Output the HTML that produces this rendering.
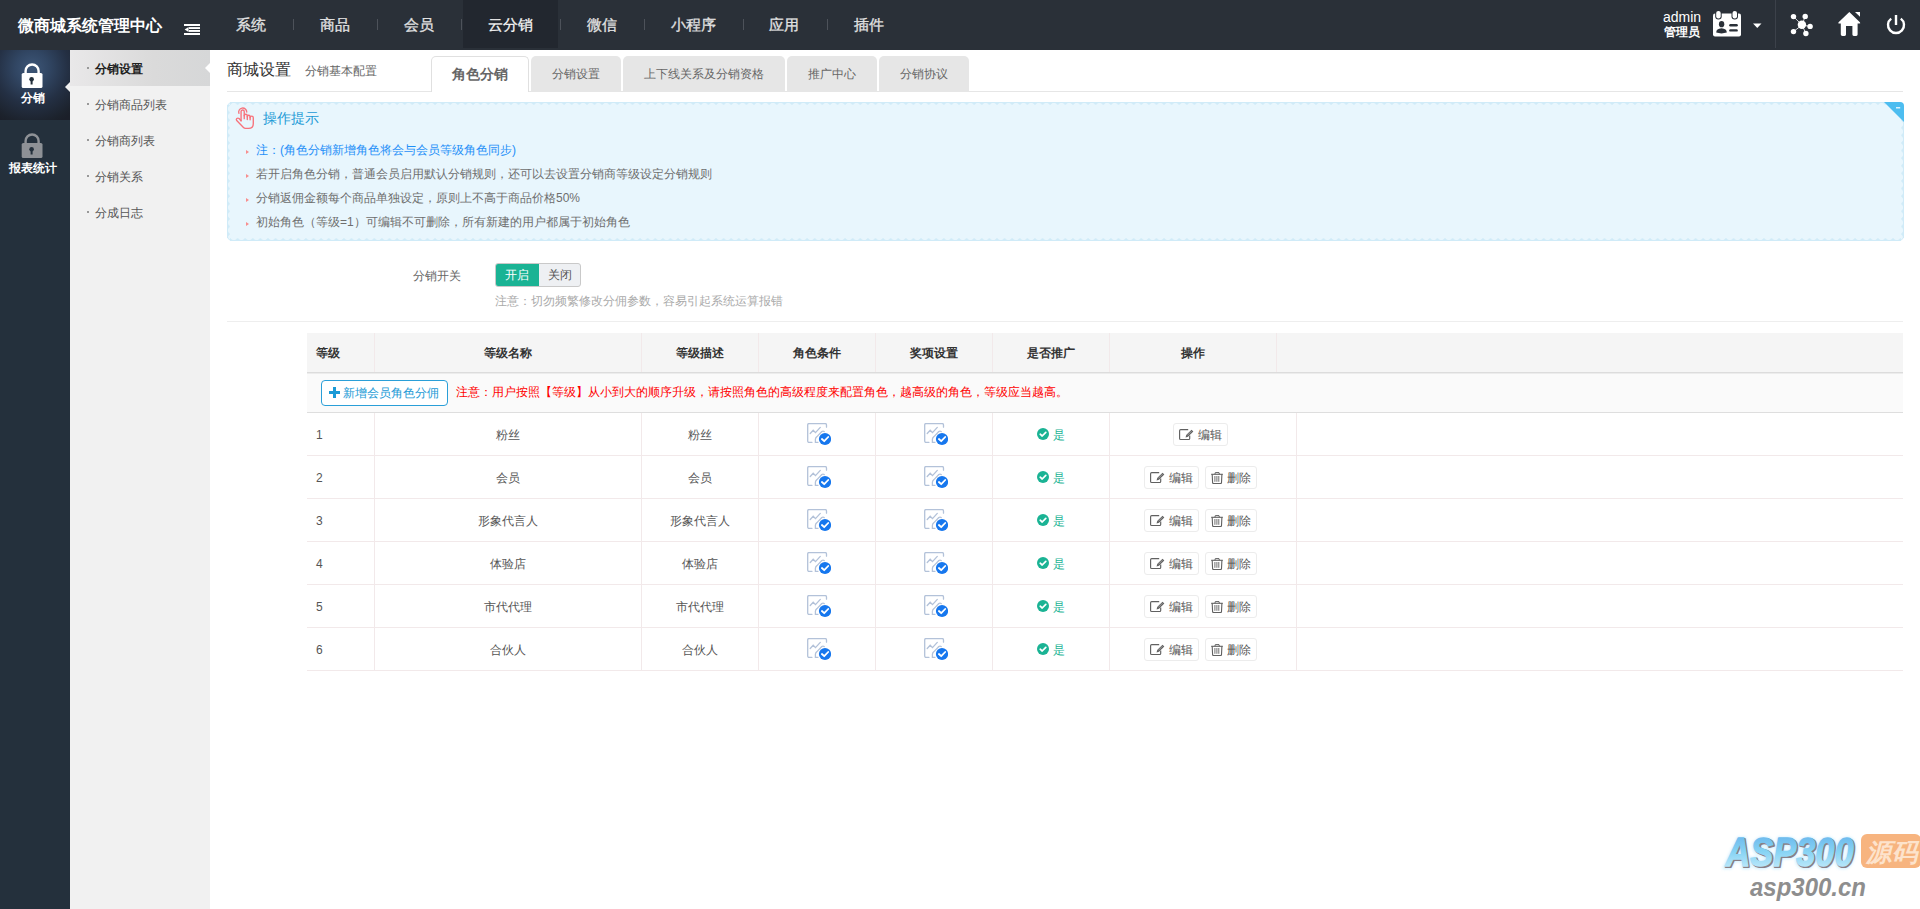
<!DOCTYPE html>
<html><head><meta charset="utf-8">
<style>
*{box-sizing:border-box}
html,body{margin:0;padding:0}
body{width:1920px;height:909px;overflow:hidden;position:relative;background:#fff;font-family:"Liberation Sans",sans-serif;font-size:12px;color:#333}
.a{position:absolute;white-space:nowrap}
#top{position:absolute;left:0;top:0;width:1920px;height:50px;background:#2a3038}
.nav{position:absolute;top:15px;font-size:15px;line-height:20px;color:#e2e2e2;-webkit-text-stroke:0.3px #e2e2e2}
.sep{position:absolute;top:19px;width:1px;height:11px;background:#4d525a}
#side1{position:absolute;left:0;top:50px;width:70px;height:859px;background:#24303c}
#side2{position:absolute;left:70px;top:50px;width:140px;height:859px;background:#f1f1f1}
.s2{position:absolute;left:25px;font-size:12px;line-height:16px;color:#555}
.s2 i{position:absolute;left:-8px;top:6px;width:2px;height:2px;background:#999}

.tab{position:absolute;top:56px;height:35px;background:#e6e6e6;border-radius:5px 5px 0 0;text-align:center;font-size:12px;line-height:36px;color:#666}
.tab.act{background:#fff;border:1px solid #e0e0e0;border-bottom:none;height:36px;font-size:14px;font-weight:bold;line-height:34px;color:#666}
#tips{position:absolute;left:227px;top:102px;width:1677px;height:139px;background:#e8f6fd;border:0;border-radius:5px}
#tips .bt{position:absolute;left:3px;right:3px;top:0;height:4px;background:radial-gradient(circle at 50% 5px,transparent 3.7px,#d0ebf8 4.4px) repeat-x;background-size:7.6px 4px}
#tips .bb{position:absolute;left:3px;right:3px;bottom:0;height:4px;background:radial-gradient(circle at 50% -1px,transparent 3.7px,#d0ebf8 4.4px) repeat-x;background-size:7.6px 4px}
#tips .bl{position:absolute;top:3px;bottom:3px;left:0;width:4px;background:radial-gradient(circle at 5px 50%,transparent 3.7px,#d0ebf8 4.4px) repeat-y;background-size:4px 7.6px}
#tips .br{position:absolute;top:3px;bottom:3px;right:0;width:4px;background:radial-gradient(circle at -1px 50%,transparent 3.7px,#d0ebf8 4.4px) repeat-y;background-size:4px 7.6px}
#tips .bc{position:absolute;inset:0;border:1.5px solid #d6eefa;border-radius:5px}
.li{position:absolute;left:29px;font-size:12px;line-height:16px;color:#6e6e6e;white-space:nowrap}
.li b{position:absolute;left:-10px;top:7.5px;width:0;height:0;border-left:3px solid #f88e8e;border-top:2.5px solid transparent;border-bottom:2.5px solid transparent}

#tbl{position:absolute;left:307px;top:0;width:1596px;height:0}
#tbl .vl{width:1px;background:#f2e9ea}
.th{font-size:12px;line-height:16px;font-weight:bold;color:#333}
.td{font-size:12px;line-height:16px;color:#555}
.addbtn{width:127px;height:26px;border:1px solid #2a9fd8;border-radius:4px;background:#fff;font-size:12px;line-height:16px;color:#1b9ad6}
.opbtn{height:23px;border:1px solid #ececec;border-radius:3px;background:#fff;font-size:12px;line-height:16px;color:#555}
</style></head><body>
<div id="top">
  <div class="a" style="left:18px;top:15px;font-size:16px;line-height:22px;font-weight:bold;color:#fff">微商城系统管理中心</div>
  <svg class="a" style="left:184px;top:24px" width="16" height="11" viewBox="0 0 16 11"><rect x="0" y="0" width="16" height="2" fill="#fff"/><rect x="5" y="3.1" width="11" height="1.9" fill="#fff"/><rect x="5" y="6" width="11" height="1.9" fill="#fff"/><polygon points="0.6,5.5 4.6,2.9 4.6,8.1" fill="#fff"/><rect x="0" y="9" width="16" height="2" fill="#fff"/></svg>
  <div class="a" style="left:463px;top:0;width:95px;height:48px;background:#22272f"></div>
  <div class="nav a" style="left:236px">系统</div>
  <div class="sep" style="left:293px"></div>
  <div class="nav a" style="left:320px">商品</div>
  <div class="sep" style="left:377px"></div>
  <div class="nav a" style="left:404px">会员</div>
  <div class="sep" style="left:461px"></div>
  <div class="nav a" style="left:488px;color:#fff">云分销</div>
  <div class="sep" style="left:560px"></div>
  <div class="nav a" style="left:587px">微信</div>
  <div class="sep" style="left:644px"></div>
  <div class="nav a" style="left:671px">小程序</div>
  <div class="sep" style="left:743px"></div>
  <div class="nav a" style="left:769px">应用</div>
  <div class="sep" style="left:827px"></div>
  <div class="nav a" style="left:854px">插件</div>

  <div class="a" style="left:1663px;top:9px;font-size:14px;line-height:17px;color:#fff">admin</div>
  <div class="a" style="left:1664px;top:25px;font-size:12px;line-height:15px;color:#fff;font-weight:bold">管理员</div>
  <!-- id card -->
  <svg class="a" style="left:1710px;top:9px" width="34" height="30" viewBox="0 0 34 30">
    <rect x="3" y="4.6" width="28" height="23" rx="2" fill="#fff"/>
    <rect x="5.2" y="1.4" width="6.5" height="9" rx="3.2" fill="#2a3038"/>
    <rect x="6.2" y="1.9" width="4.5" height="7.5" rx="2.2" fill="#fff"/>
    <rect x="21.5" y="1.4" width="6.5" height="9" rx="3.2" fill="#2a3038"/>
    <rect x="22.5" y="1.9" width="4.5" height="7.5" rx="2.2" fill="#fff"/>
    <ellipse cx="11.6" cy="15.2" rx="2.7" ry="3.1" fill="#2a3038"/>
    <path d="M6.2 23.6 Q6.2 19.6 11.5 19.2 Q16.8 19.6 16.8 23.6 Q11.5 25.2 6.2 23.6 Z" fill="#2a3038"/>
    <rect x="19.2" y="15" width="8.6" height="2.4" rx="1.2" fill="#2a3038"/>
    <rect x="19.2" y="20.2" width="8.6" height="2.4" rx="1.2" fill="#2a3038"/>
  </svg>
  <svg class="a" style="left:1753px;top:23px" width="9" height="6" viewBox="0 0 9 6"><polygon points="0,0.5 8.5,0.5 4.25,5" fill="#fff"/></svg>
  <div class="a" style="left:1775px;top:0;width:1px;height:48px;background:#3c414a"></div>
  <!-- network -->
  <svg class="a" style="left:1788px;top:11px" width="28" height="28" viewBox="0 0 28 28">
    <g stroke="#fff" stroke-width="0.8"><line x1="14" y1="14" x2="5.5" y2="5.6"/><line x1="14" y1="14" x2="17.2" y2="5.4"/><line x1="14" y1="14" x2="22.1" y2="15.4"/><line x1="14" y1="14" x2="5.5" y2="20.6"/><line x1="14" y1="14" x2="17.9" y2="22.5"/></g>
    <g fill="#fff"><circle cx="13.9" cy="13.8" r="4.2"/><circle cx="5.5" cy="5.6" r="2.7"/><circle cx="17.2" cy="5.4" r="2.7"/><circle cx="22.1" cy="15.4" r="2.7"/><circle cx="5.5" cy="20.6" r="2.7"/><circle cx="17.9" cy="22.5" r="2.7"/></g>
  </svg>
  <!-- home -->
  <svg class="a" style="left:1836px;top:10px" width="28" height="28" viewBox="0 0 28 28">
    <path d="M13.3 2 L2.6 12.2 Q1.6 13.3 3 13.6 L4.8 13.6 L4.8 24.6 Q4.8 26 6.4 26 L8.6 26 Q10 26 10 24.6 L10 16 L16.4 16 L16.4 24.6 Q16.4 26 17.8 26 L20.2 26 Q21.6 26 21.6 24.6 L21.6 13.6 L23.4 13.6 Q24.9 13.3 23.9 12.2 Z" fill="#fff"/>
    <polygon points="19,2 24,2 24,6.8" fill="#fff"/>
  </svg>
  <!-- power -->
  <svg class="a" style="left:1884px;top:13px" width="24" height="24" viewBox="0 0 24 24">
    <path d="M7.2 5.6 A8 8 0 1 0 16.8 5.6" fill="none" stroke="#fff" stroke-width="2.4"/>
    <rect x="10.8" y="2" width="2.4" height="10" fill="#fff"/>
  </svg>
</div>

<div id="side1">
  <div class="a" style="left:0;top:0;width:70px;height:70px;background:radial-gradient(circle 60px at 32px 18px,#3d5677 0%,#314663 28%,#243044 60%,#1c222c 92%,#1b1f29 100%)"></div>
  <svg class="a" style="left:21px;top:13px" width="22" height="26" viewBox="0 0 22 26">
    <path d="M4.6 10 L4.6 8 A6.5 6.5 0 0 1 17.6 8 L17.6 10" fill="none" stroke="#fff" stroke-width="2.4"/>
    <rect x="0.7" y="10" width="20.8" height="15" rx="1.6" fill="#fff"/>
    <circle cx="10.6" cy="16.3" r="2.3" fill="#24303c"/><rect x="9.6" y="17" width="2" height="4.5" fill="#24303c"/>
  </svg>
  <div class="a" style="left:21px;top:40px;font-size:12px;line-height:16px;font-weight:bold;color:#fff">分销</div>
  <polygon></polygon>
  <svg class="a" style="left:65px;top:32px" width="5" height="10" viewBox="0 0 5 10"><polygon points="5,0 0,5 5,10" fill="#f1f1f1"/></svg>
  <svg class="a" style="left:21px;top:83px" width="22" height="26" viewBox="0 0 22 26">
    <path d="M4.6 10 L4.6 8 A6.5 6.5 0 0 1 17.6 8 L17.6 10" fill="none" stroke="#8e9196" stroke-width="2.4"/>
    <rect x="0.7" y="10" width="20.8" height="15" rx="1.6" fill="#8e9196"/>
    <circle cx="10.6" cy="16.3" r="2.3" fill="#24303c"/><rect x="9.6" y="17" width="2" height="4.5" fill="#24303c"/>
  </svg>
  <div class="a" style="left:9px;top:110px;font-size:12px;line-height:16px;font-weight:bold;color:#fff">报表统计</div>
</div>

<div id="side2">
  <div class="a" style="left:0;top:0;width:140px;height:36px;background:linear-gradient(90deg,#e9e8e9,#dadada 60%,#d6d7d8)"></div>
  <svg class="a" style="left:135px;top:13px" width="5" height="10" viewBox="0 0 5 10"><polygon points="5,0 0,5 5,10" fill="#fff"/></svg>
  <div class="s2" style="top:11px;font-weight:bold;color:#222"><i></i>分销设置</div>
  <div class="s2" style="top:47px"><i></i>分销商品列表</div>
  <div class="s2" style="top:83px"><i></i>分销商列表</div>
  <div class="s2" style="top:119px"><i></i>分销关系</div>
  <div class="s2" style="top:155px"><i></i>分成日志</div>
</div>


<div id="content">
  <div class="a" style="left:227px;top:59px;font-size:16px;line-height:22px;color:#333">商城设置</div>
  <div class="a" style="left:305px;top:63px;font-size:12px;line-height:16px;color:#666">分销基本配置</div>
  <div class="a" style="left:227px;top:91px;width:1676px;height:1px;background:#e6e6e6"></div>
  <div class="tab act" style="left:431px;width:98px">角色分销</div>
  <div class="tab" style="left:531px;width:90px">分销设置</div>
  <div class="tab" style="left:623px;width:162px">上下线关系及分销资格</div>
  <div class="tab" style="left:787px;width:90px">推广中心</div>
  <div class="tab" style="left:879px;width:90px">分销协议</div>

  <div id="tips"><div class="bc"></div><div class="bt"></div><div class="bb"></div><div class="bl"></div><div class="br"></div>
    <svg class="a" style="left:6px;top:2px" width="24" height="28.4" viewBox="0 0 22 26">
      <g fill="none" stroke="#f7737c" stroke-width="1.25" stroke-linecap="round" stroke-linejoin="round">
        <path d="M5.4 8.6 A3.7 3.7 0 1 1 12.6 7.4"/>
        <path d="M7.4 15.4 L7.4 6.9 A1.45 1.45 0 0 1 10.3 6.9 L10.3 13.4"/>
        <path d="M10.3 10.8 A1.4 1.4 0 0 1 13.1 10.8 L13.1 14.3"/>
        <path d="M13.1 11.6 A1.3 1.3 0 0 1 15.7 11.6 L15.7 14.5"/>
        <path d="M15.7 12.5 A1.45 1.45 0 0 1 18.6 12.5 L18.6 18 Q18.6 22.3 14.3 22.3 L11.4 22.3 Q10.4 22.3 9.6 21.5 L3.4 15.2 Q2.6 14.2 3.5 13.3 Q4.5 12.5 5.6 13.3 L7.4 15.4"/>
      </g>
    </svg>
    <div class="a" style="left:36px;top:7px;font-size:14px;line-height:18px;color:#1b9ad6">操作提示</div>
    <div class="li" style="top:40px;color:#1e8ff8"><b></b>注：(角色分销新增角色将会与会员等级角色同步)</div>
    <div class="li" style="top:64px"><b></b>若开启角色分销，普通会员启用默认分销规则，还可以去设置分销商等级设定分销规则</div>
    <div class="li" style="top:88px"><b></b>分销返佣金额每个商品单独设定，原则上不高于商品价格50%</div>
    <div class="li" style="top:112px"><b></b>初始角色（等级=1）可编辑不可删除，所有新建的用户都属于初始角色</div>
    <svg class="a" style="right:0;top:0" width="20" height="20" viewBox="0 0 20 20"><path d="M0 0 L16 0 Q20 0 20 4 L20 20 Z" fill="#4dbdf0"/><rect x="12" y="5.2" width="4.2" height="1.2" fill="#fff"/></svg>
  </div>

  <div class="a" style="left:413px;top:268px;font-size:12px;line-height:16px;color:#666">分销开关</div>
  <div class="a" style="left:495px;top:263px;width:86px;height:24px;border:1px solid #c9c9c9;border-radius:3px;background:#eef0f3;overflow:hidden">
    <div class="a" style="left:-1px;top:-1px;width:44px;height:24px;background:#1ab394;border-radius:3px 0 0 3px;color:#fff;text-align:center;line-height:24px">开启</div>
    <div class="a" style="left:43px;top:0;width:42px;height:22px;color:#555;text-align:center;line-height:22px">关闭</div>
  </div>
  <div class="a" style="left:495px;top:293px;font-size:12px;line-height:16px;color:#aaa">注意：切勿频繁修改分佣参数，容易引起系统运算报错</div>
  <div class="a" style="left:227px;top:321px;width:1676px;height:1px;background:#eeeeee"></div>

  <div id="tbl">
<div class="a" style="left:0;top:333px;width:1596px;height:39px;background:#f5f5f5"></div>
<div class="a" style="left:0;top:372px;width:1596px;height:1px;background:#dcdcdc"></div><div class="a" style="left:0;top:373px;width:1596px;height:1px;background:#ececec"></div>
<div class="a vl" style="left:67px;top:333px;height:39px"></div>
<div class="a vl" style="left:334px;top:333px;height:39px"></div>
<div class="a vl" style="left:451px;top:333px;height:39px"></div>
<div class="a vl" style="left:568px;top:333px;height:39px"></div>
<div class="a vl" style="left:685px;top:333px;height:39px"></div>
<div class="a vl" style="left:802px;top:333px;height:39px"></div>
<div class="a vl" style="left:969px;top:333px;height:39px"></div>
<div class="a th" style="left:9px;top:345px">等级</div>
<div class="a th" style="left:67px;top:345px;width:267px;text-align:center">等级名称</div>
<div class="a th" style="left:334px;top:345px;width:117px;text-align:center">等级描述</div>
<div class="a th" style="left:451px;top:345px;width:117px;text-align:center">角色条件</div>
<div class="a th" style="left:568px;top:345px;width:117px;text-align:center">奖项设置</div>
<div class="a th" style="left:685px;top:345px;width:117px;text-align:center">是否推广</div>
<div class="a th" style="left:802px;top:345px;width:167px;text-align:center">操作</div>
<div class="a" style="left:0;top:374px;width:1596px;height:38px;background:#fafafa"></div>
<div class="a" style="left:0;top:412px;width:1596px;height:1px;background:#dedede"></div>
<div class="a addbtn" style="left:14px;top:380px"><svg class="a" style="left:7px;top:6px" width="11" height="11" viewBox="0 0 11 11"><rect x="4" y="0" width="3" height="11" fill="#1b9ad6"/><rect x="0" y="4" width="11" height="3" fill="#1b9ad6"/></svg><span class="a" style="left:21px;top:4px">新增会员角色分佣</span></div>
<div class="a" style="left:149px;top:384px;font-size:12px;line-height:16px;color:#ff0000">注意：用户按照【等级】从小到大的顺序升级，请按照角色的高级程度来配置角色，越高级的角色，等级应当越高。</div>
<div class="a" style="left:0;top:455px;width:1596px;height:1px;background:#f2e9ea"></div>
<div class="a vl" style="left:67px;top:413px;height:42px"></div>
<div class="a vl" style="left:334px;top:413px;height:42px"></div>
<div class="a vl" style="left:451px;top:413px;height:42px"></div>
<div class="a vl" style="left:568px;top:413px;height:42px"></div>
<div class="a vl" style="left:685px;top:413px;height:42px"></div>
<div class="a vl" style="left:802px;top:413px;height:42px"></div>
<div class="a vl" style="left:989px;top:413px;height:42px"></div>
<div class="a td" style="left:9px;top:427px">1</div>
<div class="a td" style="left:67px;top:427px;width:267px;text-align:center">粉丝</div>
<div class="a td" style="left:334px;top:427px;width:117px;text-align:center">粉丝</div>
<svg class="a" style="left:500px;top:423px" width="24" height="24" viewBox="0 0 24 24"><g fill="none" stroke="#b3c2d9" stroke-width="1.3" stroke-linecap="round"><path d="M5 19.3 L2.2 19.3 Q0.7 19.3 0.7 17.8 L0.7 1.8 Q0.7 0.6 2 0.6 L18.2 0.6 Q19.5 0.6 19.5 1.9 L19.5 4.2"/><path d="M3.2 10.5 L6.2 7.2 L8.5 9.6 L13.3 4.4"/><path d="M8.4 19.3 L8.4 16.3 Q8.4 15 10 13.6 L14.8 8.6 Q16 7.7 17.2 8.6"/><path d="M8.4 19.3 L11 19.3"/></g><circle cx="18" cy="16" r="6.1" fill="#1677ee"/><path d="M14.9 16 L17.2 18.2 L21.2 14" fill="none" stroke="#fff" stroke-width="1.8" stroke-linecap="round" stroke-linejoin="round"/></svg>
<svg class="a" style="left:617px;top:423px" width="24" height="24" viewBox="0 0 24 24"><g fill="none" stroke="#b3c2d9" stroke-width="1.3" stroke-linecap="round"><path d="M5 19.3 L2.2 19.3 Q0.7 19.3 0.7 17.8 L0.7 1.8 Q0.7 0.6 2 0.6 L18.2 0.6 Q19.5 0.6 19.5 1.9 L19.5 4.2"/><path d="M3.2 10.5 L6.2 7.2 L8.5 9.6 L13.3 4.4"/><path d="M8.4 19.3 L8.4 16.3 Q8.4 15 10 13.6 L14.8 8.6 Q16 7.7 17.2 8.6"/><path d="M8.4 19.3 L11 19.3"/></g><circle cx="18" cy="16" r="6.1" fill="#1677ee"/><path d="M14.9 16 L17.2 18.2 L21.2 14" fill="none" stroke="#fff" stroke-width="1.8" stroke-linecap="round" stroke-linejoin="round"/></svg>
<svg class="a" style="left:730px;top:428px" width="12" height="12" viewBox="0 0 12 12"><circle cx="6" cy="6" r="6" fill="#1ab394"/><path d="M3.2 6.2 L5.2 8 L8.8 4.3" fill="none" stroke="#fff" stroke-width="1.7" stroke-linecap="round" stroke-linejoin="round"/></svg>
<div class="a td" style="left:746px;top:427px;color:#1ab394">是</div>
<div class="a opbtn" style="left:866px;top:423px;width:55px"><svg class="a" style="left:5px;top:5px" width="15" height="12" viewBox="0 0 15 12"><path d="M9.2 0.6 L1.7 0.6 Q0.6 0.6 0.6 1.7 L0.6 9.4 Q0.6 10.5 1.7 10.5 L9.6 10.5 Q10.7 10.5 10.7 9.4 L10.7 6.6" fill="none" stroke="#606060" stroke-width="1.15"/><path d="M6.6 8.4 L7.2 6 L12.5 0.7 L14.3 2.5 L9 7.8 Z" fill="#606060"/><path d="M8.3 6.4 L12.6 2.1" stroke="#b9b9b9" stroke-width="0.7"/></svg><span class="a" style="left:24px;top:3px">编辑</span></div>
<div class="a" style="left:0;top:498px;width:1596px;height:1px;background:#f2e9ea"></div>
<div class="a vl" style="left:67px;top:456px;height:42px"></div>
<div class="a vl" style="left:334px;top:456px;height:42px"></div>
<div class="a vl" style="left:451px;top:456px;height:42px"></div>
<div class="a vl" style="left:568px;top:456px;height:42px"></div>
<div class="a vl" style="left:685px;top:456px;height:42px"></div>
<div class="a vl" style="left:802px;top:456px;height:42px"></div>
<div class="a vl" style="left:989px;top:456px;height:42px"></div>
<div class="a td" style="left:9px;top:470px">2</div>
<div class="a td" style="left:67px;top:470px;width:267px;text-align:center">会员</div>
<div class="a td" style="left:334px;top:470px;width:117px;text-align:center">会员</div>
<svg class="a" style="left:500px;top:466px" width="24" height="24" viewBox="0 0 24 24"><g fill="none" stroke="#b3c2d9" stroke-width="1.3" stroke-linecap="round"><path d="M5 19.3 L2.2 19.3 Q0.7 19.3 0.7 17.8 L0.7 1.8 Q0.7 0.6 2 0.6 L18.2 0.6 Q19.5 0.6 19.5 1.9 L19.5 4.2"/><path d="M3.2 10.5 L6.2 7.2 L8.5 9.6 L13.3 4.4"/><path d="M8.4 19.3 L8.4 16.3 Q8.4 15 10 13.6 L14.8 8.6 Q16 7.7 17.2 8.6"/><path d="M8.4 19.3 L11 19.3"/></g><circle cx="18" cy="16" r="6.1" fill="#1677ee"/><path d="M14.9 16 L17.2 18.2 L21.2 14" fill="none" stroke="#fff" stroke-width="1.8" stroke-linecap="round" stroke-linejoin="round"/></svg>
<svg class="a" style="left:617px;top:466px" width="24" height="24" viewBox="0 0 24 24"><g fill="none" stroke="#b3c2d9" stroke-width="1.3" stroke-linecap="round"><path d="M5 19.3 L2.2 19.3 Q0.7 19.3 0.7 17.8 L0.7 1.8 Q0.7 0.6 2 0.6 L18.2 0.6 Q19.5 0.6 19.5 1.9 L19.5 4.2"/><path d="M3.2 10.5 L6.2 7.2 L8.5 9.6 L13.3 4.4"/><path d="M8.4 19.3 L8.4 16.3 Q8.4 15 10 13.6 L14.8 8.6 Q16 7.7 17.2 8.6"/><path d="M8.4 19.3 L11 19.3"/></g><circle cx="18" cy="16" r="6.1" fill="#1677ee"/><path d="M14.9 16 L17.2 18.2 L21.2 14" fill="none" stroke="#fff" stroke-width="1.8" stroke-linecap="round" stroke-linejoin="round"/></svg>
<svg class="a" style="left:730px;top:471px" width="12" height="12" viewBox="0 0 12 12"><circle cx="6" cy="6" r="6" fill="#1ab394"/><path d="M3.2 6.2 L5.2 8 L8.8 4.3" fill="none" stroke="#fff" stroke-width="1.7" stroke-linecap="round" stroke-linejoin="round"/></svg>
<div class="a td" style="left:746px;top:470px;color:#1ab394">是</div>
<div class="a opbtn" style="left:837px;top:466px;width:55px"><svg class="a" style="left:5px;top:5px" width="15" height="12" viewBox="0 0 15 12"><path d="M9.2 0.6 L1.7 0.6 Q0.6 0.6 0.6 1.7 L0.6 9.4 Q0.6 10.5 1.7 10.5 L9.6 10.5 Q10.7 10.5 10.7 9.4 L10.7 6.6" fill="none" stroke="#606060" stroke-width="1.15"/><path d="M6.6 8.4 L7.2 6 L12.5 0.7 L14.3 2.5 L9 7.8 Z" fill="#606060"/><path d="M8.3 6.4 L12.6 2.1" stroke="#b9b9b9" stroke-width="0.7"/></svg><span class="a" style="left:24px;top:3px">编辑</span></div>
<div class="a opbtn" style="left:898px;top:466px;width:52px"><svg class="a" style="left:5px;top:5px" width="12" height="12" viewBox="0 0 12 12"><path d="M0.2 2.3 L11.8 2.3" stroke="#606060" stroke-width="1.1"/><path d="M3.9 2.3 L4.3 0.6 L8 0.6 L8.4 2.3" fill="none" stroke="#606060" stroke-width="1"/><path d="M1.2 2.3 L1.6 10.6 Q1.7 11.5 2.6 11.5 L9.5 11.5 Q10.4 11.5 10.5 10.6 L10.9 2.3" fill="none" stroke="#606060" stroke-width="1.1"/><path d="M3.9 4 L3.9 9.8 M5.9 4 L5.9 9.8 M7.8 4 L7.8 9.8" stroke="#606060" stroke-width="0.9"/></svg><span class="a" style="left:21px;top:3px">删除</span></div>
<div class="a" style="left:0;top:541px;width:1596px;height:1px;background:#f2e9ea"></div>
<div class="a vl" style="left:67px;top:499px;height:42px"></div>
<div class="a vl" style="left:334px;top:499px;height:42px"></div>
<div class="a vl" style="left:451px;top:499px;height:42px"></div>
<div class="a vl" style="left:568px;top:499px;height:42px"></div>
<div class="a vl" style="left:685px;top:499px;height:42px"></div>
<div class="a vl" style="left:802px;top:499px;height:42px"></div>
<div class="a vl" style="left:989px;top:499px;height:42px"></div>
<div class="a td" style="left:9px;top:513px">3</div>
<div class="a td" style="left:67px;top:513px;width:267px;text-align:center">形象代言人</div>
<div class="a td" style="left:334px;top:513px;width:117px;text-align:center">形象代言人</div>
<svg class="a" style="left:500px;top:509px" width="24" height="24" viewBox="0 0 24 24"><g fill="none" stroke="#b3c2d9" stroke-width="1.3" stroke-linecap="round"><path d="M5 19.3 L2.2 19.3 Q0.7 19.3 0.7 17.8 L0.7 1.8 Q0.7 0.6 2 0.6 L18.2 0.6 Q19.5 0.6 19.5 1.9 L19.5 4.2"/><path d="M3.2 10.5 L6.2 7.2 L8.5 9.6 L13.3 4.4"/><path d="M8.4 19.3 L8.4 16.3 Q8.4 15 10 13.6 L14.8 8.6 Q16 7.7 17.2 8.6"/><path d="M8.4 19.3 L11 19.3"/></g><circle cx="18" cy="16" r="6.1" fill="#1677ee"/><path d="M14.9 16 L17.2 18.2 L21.2 14" fill="none" stroke="#fff" stroke-width="1.8" stroke-linecap="round" stroke-linejoin="round"/></svg>
<svg class="a" style="left:617px;top:509px" width="24" height="24" viewBox="0 0 24 24"><g fill="none" stroke="#b3c2d9" stroke-width="1.3" stroke-linecap="round"><path d="M5 19.3 L2.2 19.3 Q0.7 19.3 0.7 17.8 L0.7 1.8 Q0.7 0.6 2 0.6 L18.2 0.6 Q19.5 0.6 19.5 1.9 L19.5 4.2"/><path d="M3.2 10.5 L6.2 7.2 L8.5 9.6 L13.3 4.4"/><path d="M8.4 19.3 L8.4 16.3 Q8.4 15 10 13.6 L14.8 8.6 Q16 7.7 17.2 8.6"/><path d="M8.4 19.3 L11 19.3"/></g><circle cx="18" cy="16" r="6.1" fill="#1677ee"/><path d="M14.9 16 L17.2 18.2 L21.2 14" fill="none" stroke="#fff" stroke-width="1.8" stroke-linecap="round" stroke-linejoin="round"/></svg>
<svg class="a" style="left:730px;top:514px" width="12" height="12" viewBox="0 0 12 12"><circle cx="6" cy="6" r="6" fill="#1ab394"/><path d="M3.2 6.2 L5.2 8 L8.8 4.3" fill="none" stroke="#fff" stroke-width="1.7" stroke-linecap="round" stroke-linejoin="round"/></svg>
<div class="a td" style="left:746px;top:513px;color:#1ab394">是</div>
<div class="a opbtn" style="left:837px;top:509px;width:55px"><svg class="a" style="left:5px;top:5px" width="15" height="12" viewBox="0 0 15 12"><path d="M9.2 0.6 L1.7 0.6 Q0.6 0.6 0.6 1.7 L0.6 9.4 Q0.6 10.5 1.7 10.5 L9.6 10.5 Q10.7 10.5 10.7 9.4 L10.7 6.6" fill="none" stroke="#606060" stroke-width="1.15"/><path d="M6.6 8.4 L7.2 6 L12.5 0.7 L14.3 2.5 L9 7.8 Z" fill="#606060"/><path d="M8.3 6.4 L12.6 2.1" stroke="#b9b9b9" stroke-width="0.7"/></svg><span class="a" style="left:24px;top:3px">编辑</span></div>
<div class="a opbtn" style="left:898px;top:509px;width:52px"><svg class="a" style="left:5px;top:5px" width="12" height="12" viewBox="0 0 12 12"><path d="M0.2 2.3 L11.8 2.3" stroke="#606060" stroke-width="1.1"/><path d="M3.9 2.3 L4.3 0.6 L8 0.6 L8.4 2.3" fill="none" stroke="#606060" stroke-width="1"/><path d="M1.2 2.3 L1.6 10.6 Q1.7 11.5 2.6 11.5 L9.5 11.5 Q10.4 11.5 10.5 10.6 L10.9 2.3" fill="none" stroke="#606060" stroke-width="1.1"/><path d="M3.9 4 L3.9 9.8 M5.9 4 L5.9 9.8 M7.8 4 L7.8 9.8" stroke="#606060" stroke-width="0.9"/></svg><span class="a" style="left:21px;top:3px">删除</span></div>
<div class="a" style="left:0;top:584px;width:1596px;height:1px;background:#f2e9ea"></div>
<div class="a vl" style="left:67px;top:542px;height:42px"></div>
<div class="a vl" style="left:334px;top:542px;height:42px"></div>
<div class="a vl" style="left:451px;top:542px;height:42px"></div>
<div class="a vl" style="left:568px;top:542px;height:42px"></div>
<div class="a vl" style="left:685px;top:542px;height:42px"></div>
<div class="a vl" style="left:802px;top:542px;height:42px"></div>
<div class="a vl" style="left:989px;top:542px;height:42px"></div>
<div class="a td" style="left:9px;top:556px">4</div>
<div class="a td" style="left:67px;top:556px;width:267px;text-align:center">体验店</div>
<div class="a td" style="left:334px;top:556px;width:117px;text-align:center">体验店</div>
<svg class="a" style="left:500px;top:552px" width="24" height="24" viewBox="0 0 24 24"><g fill="none" stroke="#b3c2d9" stroke-width="1.3" stroke-linecap="round"><path d="M5 19.3 L2.2 19.3 Q0.7 19.3 0.7 17.8 L0.7 1.8 Q0.7 0.6 2 0.6 L18.2 0.6 Q19.5 0.6 19.5 1.9 L19.5 4.2"/><path d="M3.2 10.5 L6.2 7.2 L8.5 9.6 L13.3 4.4"/><path d="M8.4 19.3 L8.4 16.3 Q8.4 15 10 13.6 L14.8 8.6 Q16 7.7 17.2 8.6"/><path d="M8.4 19.3 L11 19.3"/></g><circle cx="18" cy="16" r="6.1" fill="#1677ee"/><path d="M14.9 16 L17.2 18.2 L21.2 14" fill="none" stroke="#fff" stroke-width="1.8" stroke-linecap="round" stroke-linejoin="round"/></svg>
<svg class="a" style="left:617px;top:552px" width="24" height="24" viewBox="0 0 24 24"><g fill="none" stroke="#b3c2d9" stroke-width="1.3" stroke-linecap="round"><path d="M5 19.3 L2.2 19.3 Q0.7 19.3 0.7 17.8 L0.7 1.8 Q0.7 0.6 2 0.6 L18.2 0.6 Q19.5 0.6 19.5 1.9 L19.5 4.2"/><path d="M3.2 10.5 L6.2 7.2 L8.5 9.6 L13.3 4.4"/><path d="M8.4 19.3 L8.4 16.3 Q8.4 15 10 13.6 L14.8 8.6 Q16 7.7 17.2 8.6"/><path d="M8.4 19.3 L11 19.3"/></g><circle cx="18" cy="16" r="6.1" fill="#1677ee"/><path d="M14.9 16 L17.2 18.2 L21.2 14" fill="none" stroke="#fff" stroke-width="1.8" stroke-linecap="round" stroke-linejoin="round"/></svg>
<svg class="a" style="left:730px;top:557px" width="12" height="12" viewBox="0 0 12 12"><circle cx="6" cy="6" r="6" fill="#1ab394"/><path d="M3.2 6.2 L5.2 8 L8.8 4.3" fill="none" stroke="#fff" stroke-width="1.7" stroke-linecap="round" stroke-linejoin="round"/></svg>
<div class="a td" style="left:746px;top:556px;color:#1ab394">是</div>
<div class="a opbtn" style="left:837px;top:552px;width:55px"><svg class="a" style="left:5px;top:5px" width="15" height="12" viewBox="0 0 15 12"><path d="M9.2 0.6 L1.7 0.6 Q0.6 0.6 0.6 1.7 L0.6 9.4 Q0.6 10.5 1.7 10.5 L9.6 10.5 Q10.7 10.5 10.7 9.4 L10.7 6.6" fill="none" stroke="#606060" stroke-width="1.15"/><path d="M6.6 8.4 L7.2 6 L12.5 0.7 L14.3 2.5 L9 7.8 Z" fill="#606060"/><path d="M8.3 6.4 L12.6 2.1" stroke="#b9b9b9" stroke-width="0.7"/></svg><span class="a" style="left:24px;top:3px">编辑</span></div>
<div class="a opbtn" style="left:898px;top:552px;width:52px"><svg class="a" style="left:5px;top:5px" width="12" height="12" viewBox="0 0 12 12"><path d="M0.2 2.3 L11.8 2.3" stroke="#606060" stroke-width="1.1"/><path d="M3.9 2.3 L4.3 0.6 L8 0.6 L8.4 2.3" fill="none" stroke="#606060" stroke-width="1"/><path d="M1.2 2.3 L1.6 10.6 Q1.7 11.5 2.6 11.5 L9.5 11.5 Q10.4 11.5 10.5 10.6 L10.9 2.3" fill="none" stroke="#606060" stroke-width="1.1"/><path d="M3.9 4 L3.9 9.8 M5.9 4 L5.9 9.8 M7.8 4 L7.8 9.8" stroke="#606060" stroke-width="0.9"/></svg><span class="a" style="left:21px;top:3px">删除</span></div>
<div class="a" style="left:0;top:627px;width:1596px;height:1px;background:#f2e9ea"></div>
<div class="a vl" style="left:67px;top:585px;height:42px"></div>
<div class="a vl" style="left:334px;top:585px;height:42px"></div>
<div class="a vl" style="left:451px;top:585px;height:42px"></div>
<div class="a vl" style="left:568px;top:585px;height:42px"></div>
<div class="a vl" style="left:685px;top:585px;height:42px"></div>
<div class="a vl" style="left:802px;top:585px;height:42px"></div>
<div class="a vl" style="left:989px;top:585px;height:42px"></div>
<div class="a td" style="left:9px;top:599px">5</div>
<div class="a td" style="left:67px;top:599px;width:267px;text-align:center">市代代理</div>
<div class="a td" style="left:334px;top:599px;width:117px;text-align:center">市代代理</div>
<svg class="a" style="left:500px;top:595px" width="24" height="24" viewBox="0 0 24 24"><g fill="none" stroke="#b3c2d9" stroke-width="1.3" stroke-linecap="round"><path d="M5 19.3 L2.2 19.3 Q0.7 19.3 0.7 17.8 L0.7 1.8 Q0.7 0.6 2 0.6 L18.2 0.6 Q19.5 0.6 19.5 1.9 L19.5 4.2"/><path d="M3.2 10.5 L6.2 7.2 L8.5 9.6 L13.3 4.4"/><path d="M8.4 19.3 L8.4 16.3 Q8.4 15 10 13.6 L14.8 8.6 Q16 7.7 17.2 8.6"/><path d="M8.4 19.3 L11 19.3"/></g><circle cx="18" cy="16" r="6.1" fill="#1677ee"/><path d="M14.9 16 L17.2 18.2 L21.2 14" fill="none" stroke="#fff" stroke-width="1.8" stroke-linecap="round" stroke-linejoin="round"/></svg>
<svg class="a" style="left:617px;top:595px" width="24" height="24" viewBox="0 0 24 24"><g fill="none" stroke="#b3c2d9" stroke-width="1.3" stroke-linecap="round"><path d="M5 19.3 L2.2 19.3 Q0.7 19.3 0.7 17.8 L0.7 1.8 Q0.7 0.6 2 0.6 L18.2 0.6 Q19.5 0.6 19.5 1.9 L19.5 4.2"/><path d="M3.2 10.5 L6.2 7.2 L8.5 9.6 L13.3 4.4"/><path d="M8.4 19.3 L8.4 16.3 Q8.4 15 10 13.6 L14.8 8.6 Q16 7.7 17.2 8.6"/><path d="M8.4 19.3 L11 19.3"/></g><circle cx="18" cy="16" r="6.1" fill="#1677ee"/><path d="M14.9 16 L17.2 18.2 L21.2 14" fill="none" stroke="#fff" stroke-width="1.8" stroke-linecap="round" stroke-linejoin="round"/></svg>
<svg class="a" style="left:730px;top:600px" width="12" height="12" viewBox="0 0 12 12"><circle cx="6" cy="6" r="6" fill="#1ab394"/><path d="M3.2 6.2 L5.2 8 L8.8 4.3" fill="none" stroke="#fff" stroke-width="1.7" stroke-linecap="round" stroke-linejoin="round"/></svg>
<div class="a td" style="left:746px;top:599px;color:#1ab394">是</div>
<div class="a opbtn" style="left:837px;top:595px;width:55px"><svg class="a" style="left:5px;top:5px" width="15" height="12" viewBox="0 0 15 12"><path d="M9.2 0.6 L1.7 0.6 Q0.6 0.6 0.6 1.7 L0.6 9.4 Q0.6 10.5 1.7 10.5 L9.6 10.5 Q10.7 10.5 10.7 9.4 L10.7 6.6" fill="none" stroke="#606060" stroke-width="1.15"/><path d="M6.6 8.4 L7.2 6 L12.5 0.7 L14.3 2.5 L9 7.8 Z" fill="#606060"/><path d="M8.3 6.4 L12.6 2.1" stroke="#b9b9b9" stroke-width="0.7"/></svg><span class="a" style="left:24px;top:3px">编辑</span></div>
<div class="a opbtn" style="left:898px;top:595px;width:52px"><svg class="a" style="left:5px;top:5px" width="12" height="12" viewBox="0 0 12 12"><path d="M0.2 2.3 L11.8 2.3" stroke="#606060" stroke-width="1.1"/><path d="M3.9 2.3 L4.3 0.6 L8 0.6 L8.4 2.3" fill="none" stroke="#606060" stroke-width="1"/><path d="M1.2 2.3 L1.6 10.6 Q1.7 11.5 2.6 11.5 L9.5 11.5 Q10.4 11.5 10.5 10.6 L10.9 2.3" fill="none" stroke="#606060" stroke-width="1.1"/><path d="M3.9 4 L3.9 9.8 M5.9 4 L5.9 9.8 M7.8 4 L7.8 9.8" stroke="#606060" stroke-width="0.9"/></svg><span class="a" style="left:21px;top:3px">删除</span></div>
<div class="a" style="left:0;top:670px;width:1596px;height:1px;background:#f2e9ea"></div>
<div class="a vl" style="left:67px;top:628px;height:42px"></div>
<div class="a vl" style="left:334px;top:628px;height:42px"></div>
<div class="a vl" style="left:451px;top:628px;height:42px"></div>
<div class="a vl" style="left:568px;top:628px;height:42px"></div>
<div class="a vl" style="left:685px;top:628px;height:42px"></div>
<div class="a vl" style="left:802px;top:628px;height:42px"></div>
<div class="a vl" style="left:989px;top:628px;height:42px"></div>
<div class="a td" style="left:9px;top:642px">6</div>
<div class="a td" style="left:67px;top:642px;width:267px;text-align:center">合伙人</div>
<div class="a td" style="left:334px;top:642px;width:117px;text-align:center">合伙人</div>
<svg class="a" style="left:500px;top:638px" width="24" height="24" viewBox="0 0 24 24"><g fill="none" stroke="#b3c2d9" stroke-width="1.3" stroke-linecap="round"><path d="M5 19.3 L2.2 19.3 Q0.7 19.3 0.7 17.8 L0.7 1.8 Q0.7 0.6 2 0.6 L18.2 0.6 Q19.5 0.6 19.5 1.9 L19.5 4.2"/><path d="M3.2 10.5 L6.2 7.2 L8.5 9.6 L13.3 4.4"/><path d="M8.4 19.3 L8.4 16.3 Q8.4 15 10 13.6 L14.8 8.6 Q16 7.7 17.2 8.6"/><path d="M8.4 19.3 L11 19.3"/></g><circle cx="18" cy="16" r="6.1" fill="#1677ee"/><path d="M14.9 16 L17.2 18.2 L21.2 14" fill="none" stroke="#fff" stroke-width="1.8" stroke-linecap="round" stroke-linejoin="round"/></svg>
<svg class="a" style="left:617px;top:638px" width="24" height="24" viewBox="0 0 24 24"><g fill="none" stroke="#b3c2d9" stroke-width="1.3" stroke-linecap="round"><path d="M5 19.3 L2.2 19.3 Q0.7 19.3 0.7 17.8 L0.7 1.8 Q0.7 0.6 2 0.6 L18.2 0.6 Q19.5 0.6 19.5 1.9 L19.5 4.2"/><path d="M3.2 10.5 L6.2 7.2 L8.5 9.6 L13.3 4.4"/><path d="M8.4 19.3 L8.4 16.3 Q8.4 15 10 13.6 L14.8 8.6 Q16 7.7 17.2 8.6"/><path d="M8.4 19.3 L11 19.3"/></g><circle cx="18" cy="16" r="6.1" fill="#1677ee"/><path d="M14.9 16 L17.2 18.2 L21.2 14" fill="none" stroke="#fff" stroke-width="1.8" stroke-linecap="round" stroke-linejoin="round"/></svg>
<svg class="a" style="left:730px;top:643px" width="12" height="12" viewBox="0 0 12 12"><circle cx="6" cy="6" r="6" fill="#1ab394"/><path d="M3.2 6.2 L5.2 8 L8.8 4.3" fill="none" stroke="#fff" stroke-width="1.7" stroke-linecap="round" stroke-linejoin="round"/></svg>
<div class="a td" style="left:746px;top:642px;color:#1ab394">是</div>
<div class="a opbtn" style="left:837px;top:638px;width:55px"><svg class="a" style="left:5px;top:5px" width="15" height="12" viewBox="0 0 15 12"><path d="M9.2 0.6 L1.7 0.6 Q0.6 0.6 0.6 1.7 L0.6 9.4 Q0.6 10.5 1.7 10.5 L9.6 10.5 Q10.7 10.5 10.7 9.4 L10.7 6.6" fill="none" stroke="#606060" stroke-width="1.15"/><path d="M6.6 8.4 L7.2 6 L12.5 0.7 L14.3 2.5 L9 7.8 Z" fill="#606060"/><path d="M8.3 6.4 L12.6 2.1" stroke="#b9b9b9" stroke-width="0.7"/></svg><span class="a" style="left:24px;top:3px">编辑</span></div>
<div class="a opbtn" style="left:898px;top:638px;width:52px"><svg class="a" style="left:5px;top:5px" width="12" height="12" viewBox="0 0 12 12"><path d="M0.2 2.3 L11.8 2.3" stroke="#606060" stroke-width="1.1"/><path d="M3.9 2.3 L4.3 0.6 L8 0.6 L8.4 2.3" fill="none" stroke="#606060" stroke-width="1"/><path d="M1.2 2.3 L1.6 10.6 Q1.7 11.5 2.6 11.5 L9.5 11.5 Q10.4 11.5 10.5 10.6 L10.9 2.3" fill="none" stroke="#606060" stroke-width="1.1"/><path d="M3.9 4 L3.9 9.8 M5.9 4 L5.9 9.8 M7.8 4 L7.8 9.8" stroke="#606060" stroke-width="0.9"/></svg><span class="a" style="left:21px;top:3px">删除</span></div>
</div>
</div>


<svg class="a" style="left:1700px;top:820px" width="220" height="89" viewBox="0 0 220 89">
  <defs>
    <linearGradient id="wg" x1="0" y1="0" x2="0" y2="1"><stop offset="0" stop-color="#62aeea"/><stop offset="0.5" stop-color="#86d3f4"/><stop offset="1" stop-color="#cdeffc"/></linearGradient>
    <filter id="glow" x="-10%" y="-30%" width="120%" height="160%"><feGaussianBlur stdDeviation="1.6"/></filter>
  </defs>
  <text x="26" y="46.5" font-family="Liberation Sans" font-weight="bold" font-style="italic" font-size="40" textLength="128" lengthAdjust="spacingAndGlyphs" fill="#bfeaff" stroke="#bfeaff" stroke-width="4" filter="url(#glow)" opacity="0.8">ASP300</text>
  <text x="26.6" y="46.6" font-family="Liberation Sans" font-weight="bold" font-style="italic" font-size="40" textLength="128" lengthAdjust="spacingAndGlyphs" fill="#8a7f86" stroke="#8a7f86" stroke-width="2.2" stroke-linejoin="round">ASP300</text>
  <text x="25.5" y="45.5" font-family="Liberation Sans" font-weight="bold" font-style="italic" font-size="40" textLength="128" lengthAdjust="spacingAndGlyphs" fill="url(#wg)" stroke="url(#wg)" stroke-width="1.3" stroke-linejoin="round">ASP300</text>
  <rect x="161" y="14" width="60" height="34" rx="6" fill="#f7b47f"/>
  <text x="166" y="41" font-family="Liberation Sans" font-weight="bold" font-style="italic" font-size="25" fill="#fde3cc" textLength="51" lengthAdjust="spacingAndGlyphs">源码</text>
  <text x="50" y="76" font-family="Liberation Sans" font-weight="bold" font-style="italic" font-size="25" textLength="116" lengthAdjust="spacingAndGlyphs" fill="#8e8e8e">asp300.cn</text>
</svg>
</body></html>
